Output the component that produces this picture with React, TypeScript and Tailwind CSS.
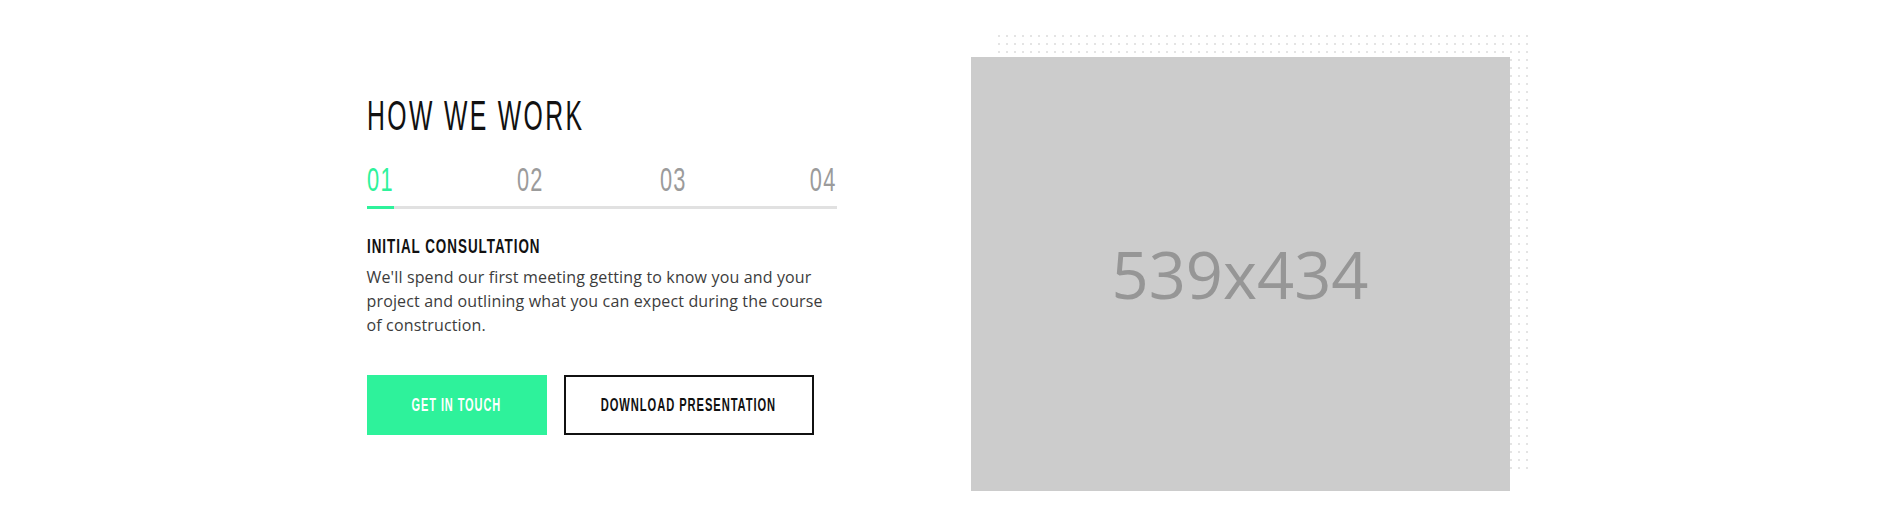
import React from 'react';

const steps = ['01', '02', '03', '04'];

const condensed = "font-['Liberation_Sans',Arial,sans-serif]";

export default function App() {
  const active = 0;

  return (
    <div className="min-h-[526px] w-full bg-white">
      <div className="mx-auto grid w-[1170px] grid-cols-[470px_539px] items-start gap-x-[134px] pb-[35px] pt-[57px]">
        {/* Left: text */}
        <div className="pt-[38px]">
          <h2 className={`${condensed} whitespace-nowrap text-[42px] font-normal leading-none text-[#111]`}>
            <span className="inline-block origin-left scale-x-[0.59] tracking-[4px]">HOW WE WORK</span>
          </h2>

          <div className={`${condensed} mt-[26px] flex justify-between text-[33px] leading-none`}>
            {steps.map((s, i) => (
              <span
                key={s}
                className={`inline-block scale-x-[0.66] tracking-[2px] ${i === 0 ? 'origin-left' : i === steps.length - 1 ? 'origin-right' : 'origin-center'} ${i === active ? 'text-[#2ef29b]' : 'text-[#9b9b9b]'}`}
              >
                {s}
              </span>
            ))}
          </div>

          <div className="mt-[10px] h-[3px] w-full bg-[#e1e1e1]">
            <div className="h-full w-[27px] bg-[#2ef29b]" />
          </div>

          <h3 className={`${condensed} mt-[26px] whitespace-nowrap text-[21px] font-bold leading-none text-[#111]`}>
            <span className="inline-block origin-left scale-x-[0.64] tracking-[1.5px]">INITIAL CONSULTATION</span>
          </h3>

          <p className="mt-[9px] font-['Open_Sans',sans-serif] text-[16px] leading-[24px] tracking-[0.15px] text-[#3c3c3c]">
            We'll spend our first meeting getting to know you and your project and outlining what you can expect during the course of construction.
          </p>

          <div className={`${condensed} mt-[38px] flex gap-[17px] whitespace-nowrap text-[18px] font-bold leading-none`}>
            <button className="flex h-[60px] w-[180px] items-center justify-center bg-[#2ef29b] text-white">
              <span className="inline-block scale-x-[0.61] tracking-[1.5px]">GET IN TOUCH</span>
            </button>
            <button className="flex h-[60px] w-[250px] items-center justify-center border-2 border-[#111] bg-white text-[#111]">
              <span className="inline-block scale-x-[0.62] tracking-[1.5px]">DOWNLOAD PRESENTATION</span>
            </button>
          </div>
        </div>

        {/* Right: image placeholder with dotted pattern */}
        <div className="relative h-[434px] w-[539px]">
          <div className="absolute left-[27px] top-[-22px] h-[440px] w-[536px] bg-[linear-gradient(90deg,transparent_2px,#fff_2px),linear-gradient(#e4e4e4_2px,transparent_2px)] bg-[size:8px_8px]" />
          <div className="relative flex h-full w-full items-center justify-center bg-[#cccccc]">
            <span className="font-['Open_Sans',sans-serif] text-[65px] leading-none text-[#969696]">539x434</span>
          </div>
        </div>
      </div>
    </div>
  );
}
